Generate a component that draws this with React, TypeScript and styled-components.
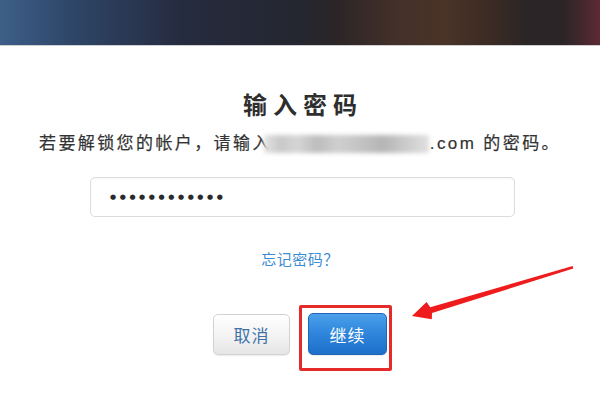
import React from "react";
import styled, { createGlobalStyle } from "styled-components";

const Global = createGlobalStyle`
  html, body { margin: 0; padding: 0; background: #fff; }
  body { font-family: "Liberation Sans", "Noto Sans CJK SC", sans-serif; }
`;

const Page = styled.div`
  position: relative;
  width: 600px;
  height: 400px;
  overflow: hidden;
  background: #fff;
`;

const TopBar = styled.div`
  height: 45px;
  border-bottom: 1px solid #cfcfd2;
  background: linear-gradient(
    90deg,
    #3d5f88 0%,
    #2e4668 12%,
    #262c40 30%,
    #24262f 50%,
    #2b2527 56%,
    #43302a 66%,
    #4b3327 74%,
    #3a2b24 82%,
    #2a2526 88%,
    #2c2527 94%,
    #5c2a35 100%
  );
`;

const Content = styled.main`
  display: flex;
  flex-direction: column;
  align-items: center;
`;

const Title = styled.h1`
  margin: 44px 0 0;
  padding-left: 6px;
  font-family: "Noto Sans CJK SC", sans-serif;
  font-size: 24px;
  line-height: 28px;
  font-weight: 700;
  letter-spacing: 6px;
  color: #2e2e2e;
`;

const Subtitle = styled.p`
  margin: 16px 0 0;
  display: flex;
  align-items: center;
  font-size: 17px;
  line-height: 20px;
  letter-spacing: 2.4px;
  color: #333;
  -webkit-text-stroke: 0.2px #333;
`;

const Blurred = styled.span`
  display: inline-block;
  width: 165px;
  height: 18px;
  margin: 0 1px 0 -8px;
  filter: blur(2px);
  background: linear-gradient(
    90deg,
    #e2e2e2 0%,
    #c9c9c9 10%,
    #d6d6d6 20%,
    #bdbdbd 32%,
    #cfcfcf 45%,
    #c4c4c4 58%,
    #b5b5b5 72%,
    #cbcbcb 86%,
    #e0e0e0 100%
  );
`;

const Field = styled.div`
  box-sizing: border-box;
  margin: 23px 0 0 5px;
  width: 425px;
  height: 40px;
  padding: 0 0 1px 19px;
  display: flex;
  align-items: center;
  border: 1px solid #dcdcdc;
  border-radius: 5px;
  background: #fff;
  box-shadow: inset 0 1px 2px rgba(0, 0, 0, 0.04);
`;

const Dots = styled.span`
  font-family: "DejaVu Sans", sans-serif;
  font-size: 7px;
  letter-spacing: 3.6px;
  color: #2a2a2a;
`;

const Forgot = styled.a`
  margin-top: 32px;
  font-family: "Noto Sans CJK SC", sans-serif;
  font-size: 15px;
  line-height: 20px;
  letter-spacing: 0.5px;
  color: #3b8cd3;
  text-decoration: none;
  cursor: pointer;
`;

const Actions = styled.div`
  margin-top: 44px;
  display: flex;
  align-items: flex-start;
  gap: 18px;
`;

const Button = styled.button<{ $primary?: boolean }>`
  box-sizing: border-box;
  width: ${(p) => (p.$primary ? "79px" : "77px")};
  height: ${(p) => (p.$primary ? "42px" : "41px")};
  margin-top: ${(p) => (p.$primary ? "0" : "1px")};
  border-radius: 5px;
  font-family: "Noto Sans CJK SC", sans-serif;
  font-size: 17px;
  letter-spacing: 1px;
  cursor: pointer;
  border: 1px solid ${(p) => (p.$primary ? "#1d66b8" : "#d2d2d2")};
  color: ${(p) => (p.$primary ? "#ffffff" : "#3f72a9")};
  background: ${(p) =>
    p.$primary
      ? "linear-gradient(180deg, #4aa0ea 0%, #2e85db 50%, #1d6fc9 100%)"
      : "linear-gradient(180deg, #ffffff 0%, #f4f4f4 50%, #e6e6e6 100%)"};
  box-shadow: 0 1px 1px rgba(0, 0, 0, 0.08);
`;

const Highlight = styled.div`
  position: relative;
`;

const RedFrame = styled.span`
  position: absolute;
  left: -9px;
  top: -8px;
  right: -5px;
  bottom: -16px;
  border: 3px solid #e52a2a;
  border-radius: 2px;
  pointer-events: none;
`;

const Annotation = styled.svg`
  position: absolute;
  left: 0;
  top: 0;
  pointer-events: none;
`;

export default function App() {
  return (
    <>
      <Global />
      <Page>
        <TopBar />
        <Content>
          <Title>输入密码</Title>
          <Subtitle>
            若要解锁您的帐户，请输入
            <Blurred aria-hidden="true" />
            .com 的密码。
          </Subtitle>
          <Field>
            <Dots>●●●●●●●●●●●●</Dots>
          </Field>
          <Forgot>忘记密码？</Forgot>
          <Actions>
            <Button>取消</Button>
            <Highlight>
              <Button $primary>继续</Button>
              <RedFrame />
            </Highlight>
          </Actions>
        </Content>
        <Annotation width="600" height="400" viewBox="0 0 600 400">
          <polygon
            points="412,316 426.6,302.1 430.2,307.2 572.7,266 573.3,268.5 432,313 431.8,319.3"
            fill="#ee1c1c"
          />
        </Annotation>
      </Page>
    </>
  );
}
